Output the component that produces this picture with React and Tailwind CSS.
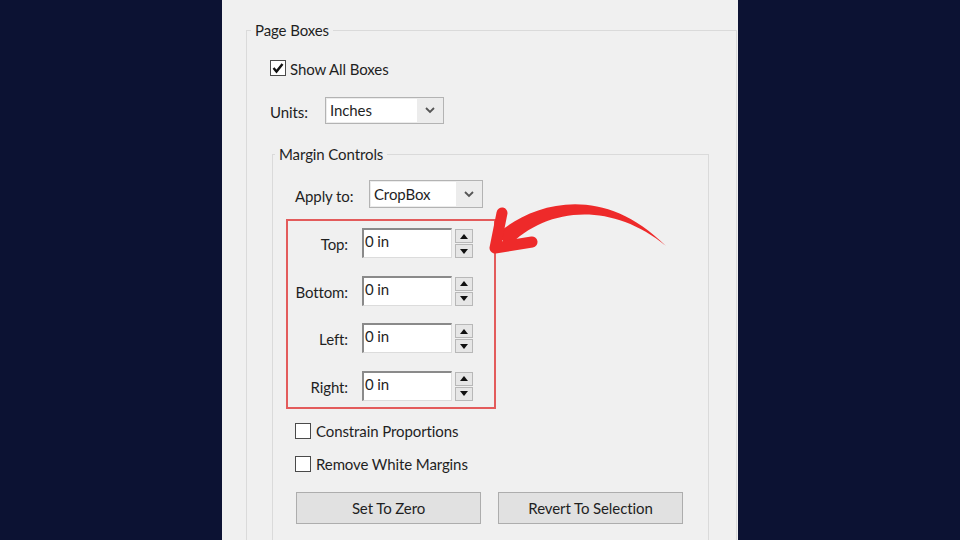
import React from 'react';

const font = { fontFamily: 'Lato, "Noto Sans", sans-serif' };

// Small check box as drawn by the classic Windows dialogs
const CheckBox = ({ checked }) => (
  <div className="w-[16px] h-[16px] border border-[#4a4a4a] bg-white flex items-center justify-center shrink-0">
    {checked && (
      <svg width="12" height="12" viewBox="0 0 12 12">
        <polyline points="1.5,6 4.5,9.5 10.5,2" fill="none" stroke="#111" strokeWidth="2.4" />
      </svg>
    )}
  </div>
);

const Chevron = () => (
  <svg width="10" height="7" viewBox="0 0 10 7">
    <polyline points="1,1 5,5 9,1" fill="none" stroke="#555" strokeWidth="1.8" />
  </svg>
);

const Select = ({ value, className }) => (
  <div className={`flex border border-[#b3b3b3] bg-[#ececec] ${className}`}>
    <div className="flex-1 bg-white m-[1px] mr-0 flex items-center pl-[3px]">{value}</div>
    <div className="w-[26px] flex items-center justify-center">
      <Chevron />
    </div>
  </div>
);

const Spinner = () => (
  <div className="flex flex-col gap-[1px] pt-[1px]">
    {['up', 'down'].map((dir) => (
      <div key={dir} className="w-[18px] h-[14px] bg-[#e6e6e6] border border-[#b8b8b8] flex items-center justify-center">
        <svg width="8" height="5" viewBox="0 0 8 5">
          {dir === 'up'
            ? <polygon points="0,5 4,0 8,5" fill="#111" />
            : <polygon points="0,0 8,0 4,5" fill="#111" />}
        </svg>
      </div>
    ))}
  </div>
);

const MarginRow = ({ label }) => (
  <div className="flex items-start h-[30px]">
    <div className="w-[60px] text-right pt-[6px] leading-[20px]">{label}</div>
    <div className="ml-[14px] w-[90px] h-[30px] bg-white border-t-2 border-l-2 border-t-[#8a8a8a] border-l-[#8a8a8a] border-r border-b border-r-[#dcdcdc] border-b-[#dcdcdc] pl-[1px] pt-[1px] leading-[20px]">
      0 in
    </div>
    <div className="ml-[3px]">
      <Spinner />
    </div>
  </div>
);

const Button = ({ children }) => (
  <div className="w-[185px] h-[32px] bg-[#e1e1e1] border border-[#adadad] flex items-center justify-center pt-[2px]">
    {children}
  </div>
);

export default function App() {
  return (
    <div className="relative w-[960px] h-[540px] bg-[#0c1233] overflow-hidden text-[15px] tracking-[-0.1px] text-[#1f1f1f]" style={font}>
      <div className="ml-[222px] w-[516px] h-[540px] bg-[#f0f0f0] overflow-hidden pt-[20px] pl-[24px]">
        <fieldset className="border border-[#dadada] w-[491px] h-[620px]">
          <legend className="ml-[4px] px-[4px] leading-[20px]">Page Boxes</legend>
          <div className="pl-[23px] pt-[20px]">
            <div className="flex items-center gap-[4px] h-[16px]">
              <CheckBox checked />
              <span className="pt-[2px]">Show All Boxes</span>
            </div>

            <div className="flex items-center mt-[21px]">
              <span className="w-[55px] pt-[4px]">Units:</span>
              <Select value="Inches" className="w-[119px] h-[27px]" />
            </div>

            <fieldset className="mt-[20px] ml-[2px] w-[437px] h-[460px] border border-[#dadada]">
              <legend className="ml-[2px] px-[4px] leading-[20px]">Margin Controls</legend>
              <div className="pl-[13px] pt-[16px]">
                <div className="flex items-center ml-[9px]">
                  <span className="w-[74px] pt-[4px]">Apply to:</span>
                  <Select value="CropBox" className="w-[114px] h-[28px]" />
                </div>

                <div className="mt-[11px] w-[210px] border-2 border-[#e35b5b] pt-[7px] pb-[6px] flex flex-col gap-[17.5px]">
                  <MarginRow label="Top:" />
                  <MarginRow label="Bottom:" />
                  <MarginRow label="Left:" />
                  <MarginRow label="Right:" />
                </div>

                <div className="ml-[9px] mt-[14px] flex items-center gap-[5px] h-[16px]">
                  <CheckBox />
                  <span className="pt-[1px]">Constrain Proportions</span>
                </div>
                <div className="ml-[9px] mt-[17px] flex items-center gap-[5px] h-[16px]">
                  <CheckBox />
                  <span className="pt-[1px]">Remove White Margins</span>
                </div>

                <div className="ml-[10px] mt-[20px] flex gap-[17px]">
                  <Button>Set To Zero</Button>
                  <Button>Revert To Selection</Button>
                </div>
              </div>
            </fieldset>
          </div>
        </fieldset>
      </div>

      {/* curved red pointer arrow */}
      <svg className="absolute left-0 top-0 pointer-events-none" width="960" height="540" viewBox="0 0 960 540">
        <path
          d="M 497 234 C 530 205, 600 180, 666 246 C 610 200, 545 208, 508 247 Z"
          fill="#ee2a2a"
        />
        <path
          d="M 502 213 L 495 248 L 532 242"
          fill="none"
          stroke="#ee2a2a"
          strokeWidth="11"
          strokeLinecap="round"
          strokeLinejoin="round"
        />
      </svg>
    </div>
  );
}
